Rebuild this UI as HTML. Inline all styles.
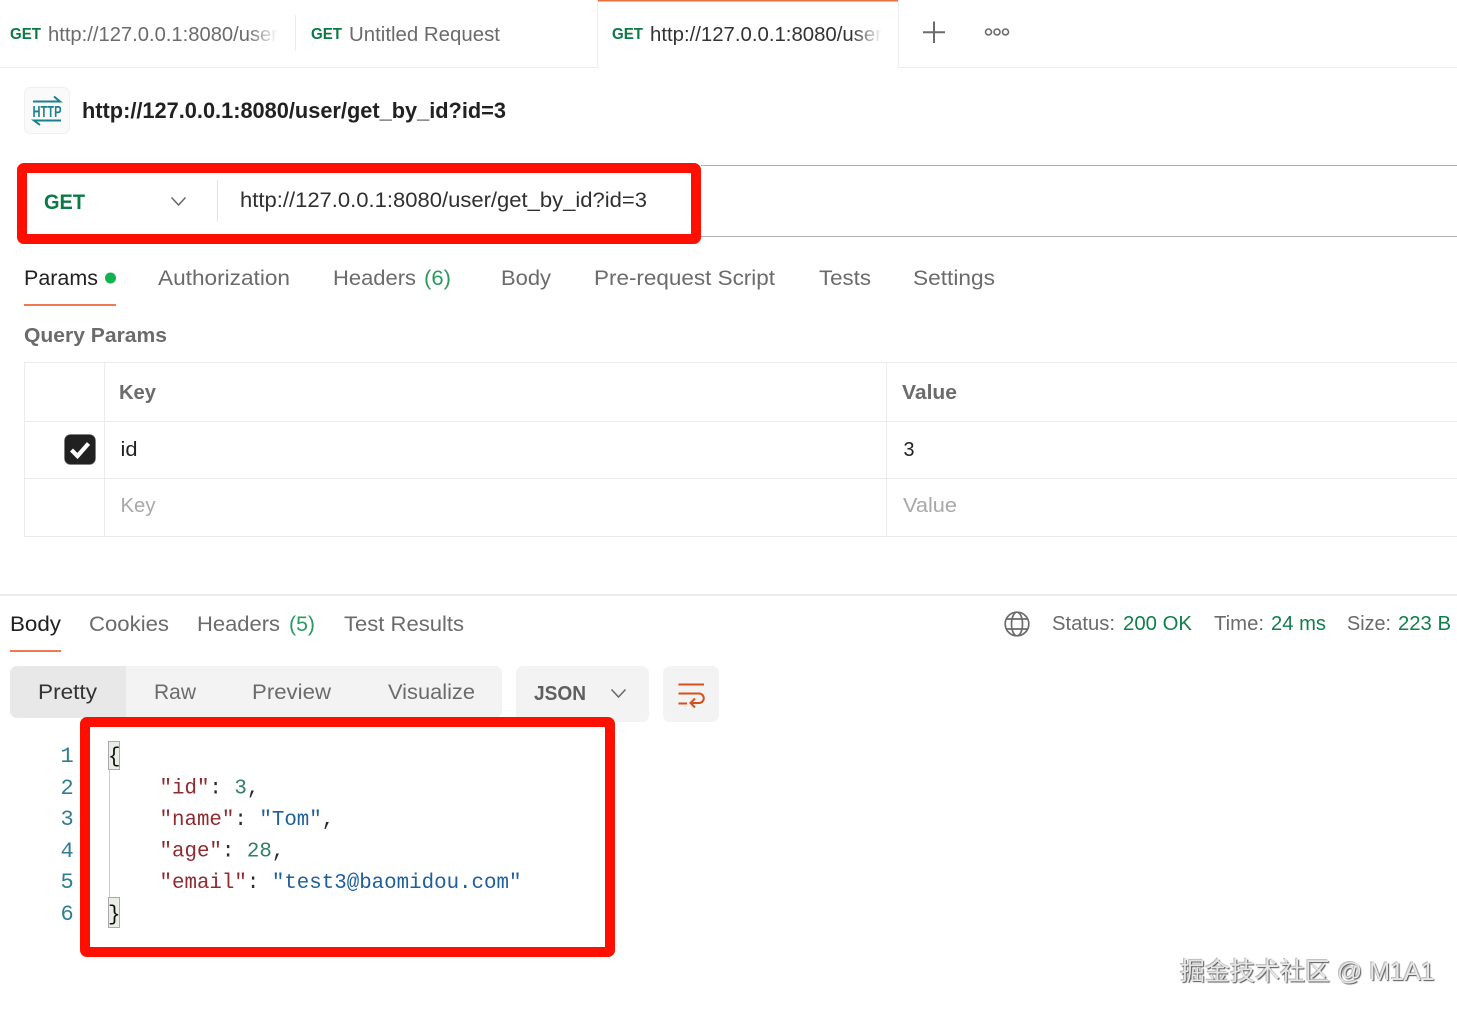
<!DOCTYPE html>
<html>
<head>
<meta charset="utf-8">
<style>
html,body{margin:0;padding:0;background:#fff;width:1457px;height:1011px;overflow:hidden}
svg{position:absolute;left:0;top:0}
text{font-family:"Liberation Sans",sans-serif;font-size:20px;fill:#6b6b6b;white-space:pre}
.g{fill:#0b7a45;font-weight:bold}
.gn{fill:#0f7f4c}
.d{fill:#212121}
.b{font-weight:bold}
.ph{fill:#a8a8a8}
.ln{font-family:"Liberation Mono",monospace;font-size:22px;fill:#2f7d93}
.c{font-family:"Liberation Mono",monospace;font-size:20.8px;fill:#2a2a2a}
.k{fill:#8f2a2f}.s{fill:#1f5f9c}.n{fill:#2f8063}
#wm{position:absolute;left:1180px;top:955px;font:25px/34px "Liberation Sans","Noto Sans CJK SC",sans-serif;color:#e6e6e6;text-shadow:1px 1px 1px #555,-1px -1px 0 #bbb;white-space:nowrap}
</style>
</head>
<body>
<svg width="1457" height="1011" viewBox="0 0 1457 1011" xmlns="http://www.w3.org/2000/svg">
<defs>
<linearGradient id="f"><stop offset="0" stop-color="#fff" stop-opacity="0"/><stop offset="1" stop-color="#fff"/></linearGradient>
</defs>

<!-- tab bar -->
<path d="M0 67.5H597.5V0M898.5 0V67.5H1457" fill="none" stroke="#ededed"/>
<rect x="598" y="0" width="300" height="1.5" fill="#e8703f"/>
<rect x="295" y="15" width="1" height="36" fill="#ececec"/>
<text x="10" y="39" class="g" style="font-size:16px" textLength="31" lengthAdjust="spacingAndGlyphs">GET</text>
<text x="48" y="41" textLength="230" lengthAdjust="spacingAndGlyphs">http://127.0.0.1:8080/user</text>
<rect x="248" y="20" width="30" height="28" fill="url(#f)"/>
<text x="311" y="39" class="g" style="font-size:16px" textLength="31" lengthAdjust="spacingAndGlyphs">GET</text>
<text x="349" y="41" textLength="151" lengthAdjust="spacingAndGlyphs">Untitled Request</text>
<text x="612" y="39" class="g" style="font-size:16px" textLength="31" lengthAdjust="spacingAndGlyphs">GET</text>
<text x="650" y="41" style="fill:#333" textLength="232" lengthAdjust="spacingAndGlyphs">http://127.0.0.1:8080/user</text>
<rect x="852" y="20" width="30" height="28" fill="url(#f)"/>
<path d="M934 21.500V43M923 32.300H945" stroke="#6b6b6b" stroke-width="2" fill="none"/>
<g fill="none" stroke="#6b6b6b" stroke-width="1.600"><circle cx="988.500" cy="32" r="3"/><circle cx="997" cy="32" r="3"/><circle cx="1005.500" cy="32" r="3"/></g>

<!-- title -->
<rect x="24.500" y="87.500" width="45" height="46" rx="6" fill="#fafafa" stroke="#f0f0f0"/>
<g fill="none" stroke="#1a7f8e" stroke-width="2">
<path d="M33 101.500H60L54 96.500"/>
<path d="M61 120.500H34L40 125"/>
</g>
<text x="32.500" y="117" style="font-size:16px;fill:#1a7f8e;font-weight:bold" textLength="29" lengthAdjust="spacingAndGlyphs">HTTP</text>
<text x="82" y="118" class="d b" style="font-size:22px" textLength="424" lengthAdjust="spacingAndGlyphs">http://127.0.0.1:8080/user/get_by_id?id=3</text>

<!-- url bar -->
<rect x="701" y="165" width="756" height="1" fill="#b0b0b0"/>
<rect x="701" y="236" width="756" height="1" fill="#b0b0b0"/>
<rect x="22" y="168" width="674" height="71" rx="2" fill="#fff" stroke="#ff0f00" stroke-width="10"/>
<text x="44" y="209" class="g" style="font-size:21px" textLength="41" lengthAdjust="spacingAndGlyphs">GET</text>
<path d="M171.500 197.500L178.500 205L185.500 197.500" fill="none" stroke="#6b6b6b" stroke-width="1.600"/>
<rect x="217" y="180" width="1" height="42" fill="#e4e4e4"/>
<text x="240" y="207" style="font-size:21px;fill:#303030" textLength="407" lengthAdjust="spacingAndGlyphs">http://127.0.0.1:8080/user/get_by_id?id=3</text>

<!-- request tabs -->
<text x="24" y="285" class="d" style="font-size:21px" textLength="74" lengthAdjust="spacingAndGlyphs">Params</text>
<circle cx="110.500" cy="278" r="5.500" fill="#10b14f"/>
<rect x="24" y="304" width="92" height="2" fill="#ef7a52"/>
<text x="158" y="285" style="font-size:21px" textLength="132" lengthAdjust="spacingAndGlyphs">Authorization</text>
<text x="333" y="285" style="font-size:21px" textLength="83" lengthAdjust="spacingAndGlyphs">Headers</text>
<text x="424" y="285" style="font-size:21px;fill:#2c9a5f" textLength="27" lengthAdjust="spacingAndGlyphs">(6)</text>
<text x="501" y="285" style="font-size:21px" textLength="50" lengthAdjust="spacingAndGlyphs">Body</text>
<text x="594" y="285" style="font-size:21px" textLength="181" lengthAdjust="spacingAndGlyphs">Pre-request Script</text>
<text x="819" y="285" style="font-size:21px" textLength="52" lengthAdjust="spacingAndGlyphs">Tests</text>
<text x="913" y="285" style="font-size:21px" textLength="82" lengthAdjust="spacingAndGlyphs">Settings</text>
<text x="24" y="342" class="b" style="font-size:20px" textLength="143" lengthAdjust="spacingAndGlyphs">Query Params</text>

<!-- table -->
<path d="M1457 362.500H24.500V536.500H1457M24.500 421.500H1457M24.500 478.500H1457M104.500 362.500V536.500M886.500 362.500V536.500" fill="none" stroke="#ececec"/>
<text x="119" y="399" class="b" textLength="37" lengthAdjust="spacingAndGlyphs">Key</text>
<text x="902" y="399" class="b" textLength="55" lengthAdjust="spacingAndGlyphs">Value</text>
<rect x="64.500" y="434.500" width="31" height="30" rx="6" fill="#212121" stroke="#777" stroke-width=".6"/>
<path d="M71.500 450L77.500 456L88.500 443.500" fill="none" stroke="#fff" stroke-width="4.200"/>
<text x="120.500" y="456" class="d" textLength="17" lengthAdjust="spacingAndGlyphs">id</text>
<text x="903.500" y="456" class="d" textLength="11" lengthAdjust="spacingAndGlyphs">3</text>
<text x="120.500" y="512" class="ph" textLength="35" lengthAdjust="spacingAndGlyphs">Key</text>
<text x="903" y="512" class="ph" textLength="54" lengthAdjust="spacingAndGlyphs">Value</text>

<!-- response tabs -->
<rect x="0" y="594" width="1457" height="2" fill="#ececec"/>
<text x="10" y="631" class="d" style="font-size:21px" textLength="51" lengthAdjust="spacingAndGlyphs">Body</text>
<rect x="10" y="650" width="51" height="2" fill="#ef7a52"/>
<text x="89" y="631" style="font-size:21px" textLength="80" lengthAdjust="spacingAndGlyphs">Cookies</text>
<text x="197" y="631" style="font-size:21px" textLength="83" lengthAdjust="spacingAndGlyphs">Headers</text>
<text x="289" y="631" style="font-size:21px;fill:#2c9a5f" textLength="26" lengthAdjust="spacingAndGlyphs">(5)</text>
<text x="344" y="631" style="font-size:21px" textLength="120" lengthAdjust="spacingAndGlyphs">Test Results</text>

<g fill="none" stroke="#6b6b6b" stroke-width="1.700">
<circle cx="1017" cy="624" r="11.800"/>
<ellipse cx="1017" cy="624" rx="5.500" ry="11.800"/>
<path d="M1006.500 619H1027.500M1006.500 629H1027.500"/>
</g>
<text x="1052" y="630" textLength="63" lengthAdjust="spacingAndGlyphs">Status:</text>
<text x="1123" y="630" class="gn" textLength="69" lengthAdjust="spacingAndGlyphs">200 OK</text>
<text x="1214" y="630" textLength="50" lengthAdjust="spacingAndGlyphs">Time:</text>
<text x="1271" y="630" class="gn" textLength="55" lengthAdjust="spacingAndGlyphs">24 ms</text>
<text x="1347" y="630" textLength="44" lengthAdjust="spacingAndGlyphs">Size:</text>
<text x="1398" y="630" class="gn" textLength="53" lengthAdjust="spacingAndGlyphs">223 B</text>

<!-- format bar -->
<rect x="10" y="666" width="492" height="52" rx="7" fill="#f3f3f3"/>
<path d="M126 666H17a7 7 0 0 0-7 7V711a7 7 0 0 0 7 7H126Z" fill="#e8e8e8"/>
<text x="38" y="699" style="font-size:21px;fill:#333" textLength="59" lengthAdjust="spacingAndGlyphs">Pretty</text>
<text x="154" y="699" style="font-size:21px" textLength="42" lengthAdjust="spacingAndGlyphs">Raw</text>
<text x="252" y="699" style="font-size:21px" textLength="79" lengthAdjust="spacingAndGlyphs">Preview</text>
<text x="388" y="699" style="font-size:21px" textLength="87" lengthAdjust="spacingAndGlyphs">Visualize</text>
<rect x="516" y="666" width="133" height="56" rx="7" fill="#f3f3f3"/>
<text x="534" y="700" style="font-size:20px;font-weight:bold;fill:#5f5f5f" textLength="52" lengthAdjust="spacingAndGlyphs">JSON</text>
<path d="M611.500 689.500L618.500 697L625.500 689.500" fill="none" stroke="#6b6b6b" stroke-width="1.600"/>
<rect x="663" y="666" width="56" height="56" rx="7" fill="#f3f3f3"/>
<path d="M678.500 684.500H704M678.500 693.500H699a4.300 4.300 0 0 1 0 9.500H691M695 698.500L690.500 703L695 707.500M678.500 703.500H687" fill="none" stroke="#d4501e" stroke-width="2"/>

<!-- response body -->
<rect x="85" y="722" width="525" height="230" rx="2" fill="#fff" stroke="#ff0f00" stroke-width="10"/>
<text x="60.500" y="762" class="ln">1</text>
<text x="60.500" y="794" class="ln">2</text>
<text x="60.500" y="825" class="ln">3</text>
<text x="60.500" y="857" class="ln">4</text>
<text x="60.500" y="888" class="ln">5</text>
<text x="60.500" y="920" class="ln">6</text>
<rect x="109" y="769" width="1" height="128" fill="#ccc"/>
<rect x="108.500" y="741.500" width="11" height="28" fill="#e9efe6" stroke="#aaa"/>
<rect x="108.500" y="897.500" width="11" height="30" fill="#e9efe6" stroke="#aaa"/>
<text x="108" y="762" class="c" style="fill:#111">{</text>
<text x="108" y="920" class="c" style="fill:#111">}</text>
<text x="159.500" y="793.500" class="c"><tspan class="k">"id"</tspan>: <tspan class="n">3</tspan>,</text>
<text x="159.500" y="825" class="c"><tspan class="k">"name"</tspan>: <tspan class="s">"Tom"</tspan>,</text>
<text x="159.500" y="856.500" class="c"><tspan class="k">"age"</tspan>: <tspan class="n">28</tspan>,</text>
<text x="159.500" y="888" class="c"><tspan class="k">"email"</tspan>: <tspan class="s">"test3@baomidou.com"</tspan></text>
</svg>
<div id="wm">掘金技术社区 @ M1A1</div>
</body>
</html>
